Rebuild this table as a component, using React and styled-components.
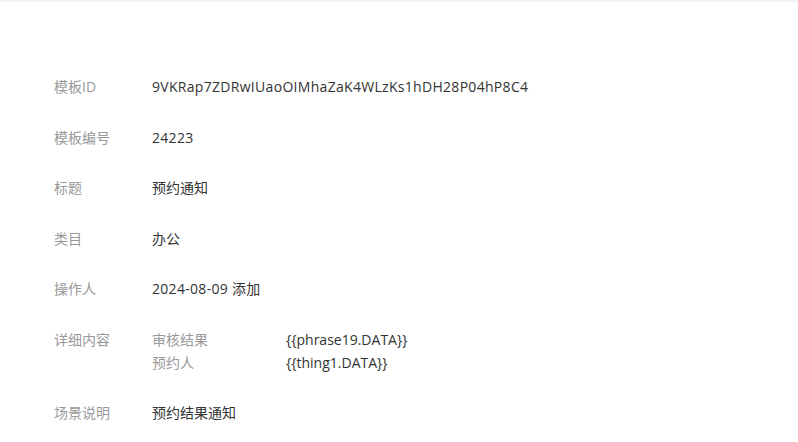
import React from "react"
import styled, { createGlobalStyle } from "styled-components"

const GlobalStyle = createGlobalStyle`
  html, body {
    margin: 0;
    padding: 0;
    background: #fff;
  }
  body {
    font-family: "Open Sans", "Noto Sans CJK SC", sans-serif;
    -webkit-font-smoothing: antialiased;
  }
`

const TopBar = styled.div`
  height: 2px;
  background-color: #f3f3f3;
`

const Container = styled.div`
  padding: 74px 0 0 54px;
  display: flex;
  flex-direction: column;
  gap: 28.5px;
`

const Row = styled.div`
  display: flex;
  font-size: 14px;
  line-height: 22px;
`

const Label = styled.div`
  width: 98px;
  flex-shrink: 0;
  color: #999;
`

const Value = styled.div`
  color: #333;
  letter-spacing: ${(p) => (p.$wide ? "0.3px" : "0")};
`

const Detail = styled.div`
  display: grid;
  grid-template-columns: 134px auto;
  row-gap: 1px;
`

const DetailKey = styled.div`
  color: #999;
`

const DetailValue = styled.div`
  color: #333;
`

const rows = [
  ["模板ID", "9VKRap7ZDRwIUaoOIMhaZaK4WLzKs1hDH28P04hP8C4", true],
  ["模板编号", "24223", true],
  ["标题", "预约通知"],
  ["类目", "办公"],
  ["操作人", "2024-08-09 添加", true],
]

const details = [
  ["审核结果", "{{phrase19.DATA}}"],
  ["预约人", "{{thing1.DATA}}"],
]

const App = () => {
  return (
    <>
      <GlobalStyle />
      <TopBar />
      <Container>
        {rows.map(([label, value, wide]) => (
          <Row key={label}>
            <Label>{label}</Label>
            <Value $wide={wide}>{value}</Value>
          </Row>
        ))}
        <Row>
          <Label>详细内容</Label>
          <Detail>
            {details.map(([k, v]) => (
              <React.Fragment key={k}>
                <DetailKey>{k}</DetailKey>
                <DetailValue>{v}</DetailValue>
              </React.Fragment>
            ))}
          </Detail>
        </Row>
        <Row>
          <Label>场景说明</Label>
          <Value>预约结果通知</Value>
        </Row>
      </Container>
    </>
  )
}

export default App
